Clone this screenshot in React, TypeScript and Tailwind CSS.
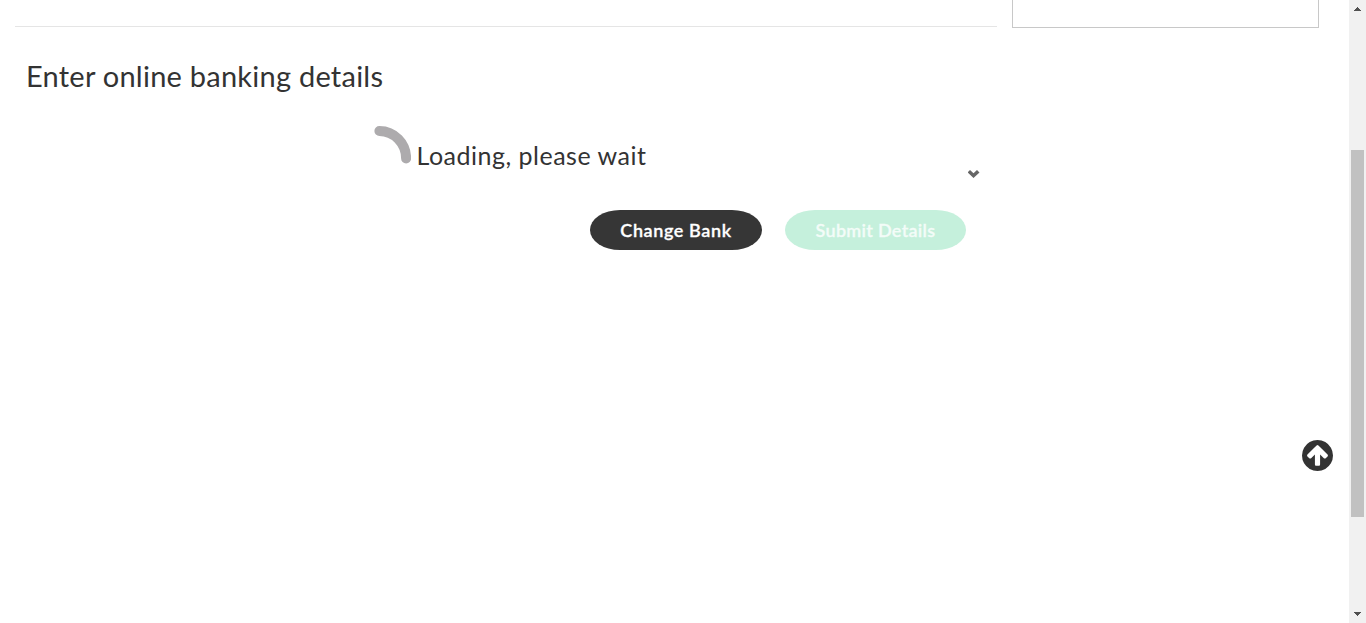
function Spinner() {
  return (
    <svg className="h-[39px] w-[38px] shrink-0" viewBox="0 0 38 39" fill="none">
      <path d="M6.4 6A26.7 27.4 0 0 1 33.1 33.4" stroke="#adabad" strokeWidth="10" strokeLinecap="round" />
    </svg>
  );
}

function ArrowCircleUp({ className }: { className: string }) {
  return (
    <svg className={className} viewBox="128 128 1536 1536" fill="currentColor">
      <path d="M1412 895q0-27-18-45l-362-362-91-91q-18-18-45-18t-45 18l-91 91-362 362q-18 18-18 45t18 45l91 91q18 18 45 18t45-18l189-189v502q0 26 19 45t45 19h128q26 0 45-19t19-45v-502l189 189q19 19 45 19t45-19l91-91q18-18 18-45zm252 1q0 209-103 385.5t-279.5 279.5-385.5 103-385.5-103-279.5-279.5-103-385.5 103-385.5 279.5-279.5 385.5-103 385.5 103 279.5 279.5 103 385.5z" />
    </svg>
  );
}

function Scrollbar() {
  return (
    <div className="flex w-[17px] shrink-0 flex-col items-center justify-between bg-[#f1f1f1]">
      <svg className="mt-[7px] h-[4px] w-[7px]" viewBox="0 0 7 4" shapeRendering="crispEdges">
        <path d="M3 0h1v1h1v1h1v1h1v1H0V3h1V2h1V1h1z" fill="#505050" />
      </svg>
      <div className="mt-[139px] h-[367px] w-[13px] bg-[#c1c1c1]" />
      <div className="grow" />
      <svg className="mb-[7px] h-[4px] w-[7px]" viewBox="0 0 7 4" shapeRendering="crispEdges">
        <path d="M0 0h7v1H6v1H5v1H4v1H3V3H2V2H1V1H0z" fill="#505050" />
      </svg>
    </div>
  );
}

export default function App() {
  return (
    <div className="flex h-[623px] w-[1366px] overflow-hidden bg-white font-['Lato',sans-serif] text-[#333333]">
      <div className="flex grow items-start">
        <main className="ml-[15px] flex w-[982px] flex-col">
          <div className="h-[27px] border-b border-[#e5e5e5]" />
          <h1 className="mt-[31px] ml-[11px] h-[36px] text-[29px] leading-[36px] whitespace-nowrap tracking-[0.24px]">
            Enter online banking details
          </h1>
          <div className="mt-[31px] flex h-[48px] items-start pl-[358px]">
            <Spinner />
            <span className="mt-[14px] ml-[5.5px] text-[25px] leading-[32px] whitespace-nowrap tracking-[0.5px]">
              Loading, please wait
            </span>
            <svg className="mt-[45px] mr-[17px] ml-auto h-[8px] w-[12px]" viewBox="0 0 12 8">
              <path d="M2 0 5.5 3.2 9 0 11.5 2.4 5.5 8-.3 2.4z" fill="#666666" />
            </svg>
          </div>
          <div className="mt-[37px] flex h-[40px] gap-[23px] pl-[575px]">
            <button className="h-[40px] w-[172px] rounded-[30px/20px] bg-[#363636] text-[18px] leading-[40px] font-semibold whitespace-nowrap text-white tracking-[0.6px] [-webkit-text-stroke:0.3px_currentColor]">
              Change Bank
            </button>
            <button className="h-[40px] w-[181px] rounded-[30px/20px] bg-[#c5f0dc] text-[18px] leading-[40px] font-semibold whitespace-nowrap text-[#f3fcf8] tracking-[0.3px] [-webkit-text-stroke:0.3px_currentColor]">
              Submit Details
            </button>
          </div>
        </main>
        <aside className="ml-[15px] h-[28px] w-[307px] border-x border-b border-[#c8c8c8]" />
      </div>
      <ArrowCircleUp className="absolute top-[440px] left-[1302px] h-[31px] w-[31px] text-[#333333]" />
      <Scrollbar />
    </div>
  );
}
